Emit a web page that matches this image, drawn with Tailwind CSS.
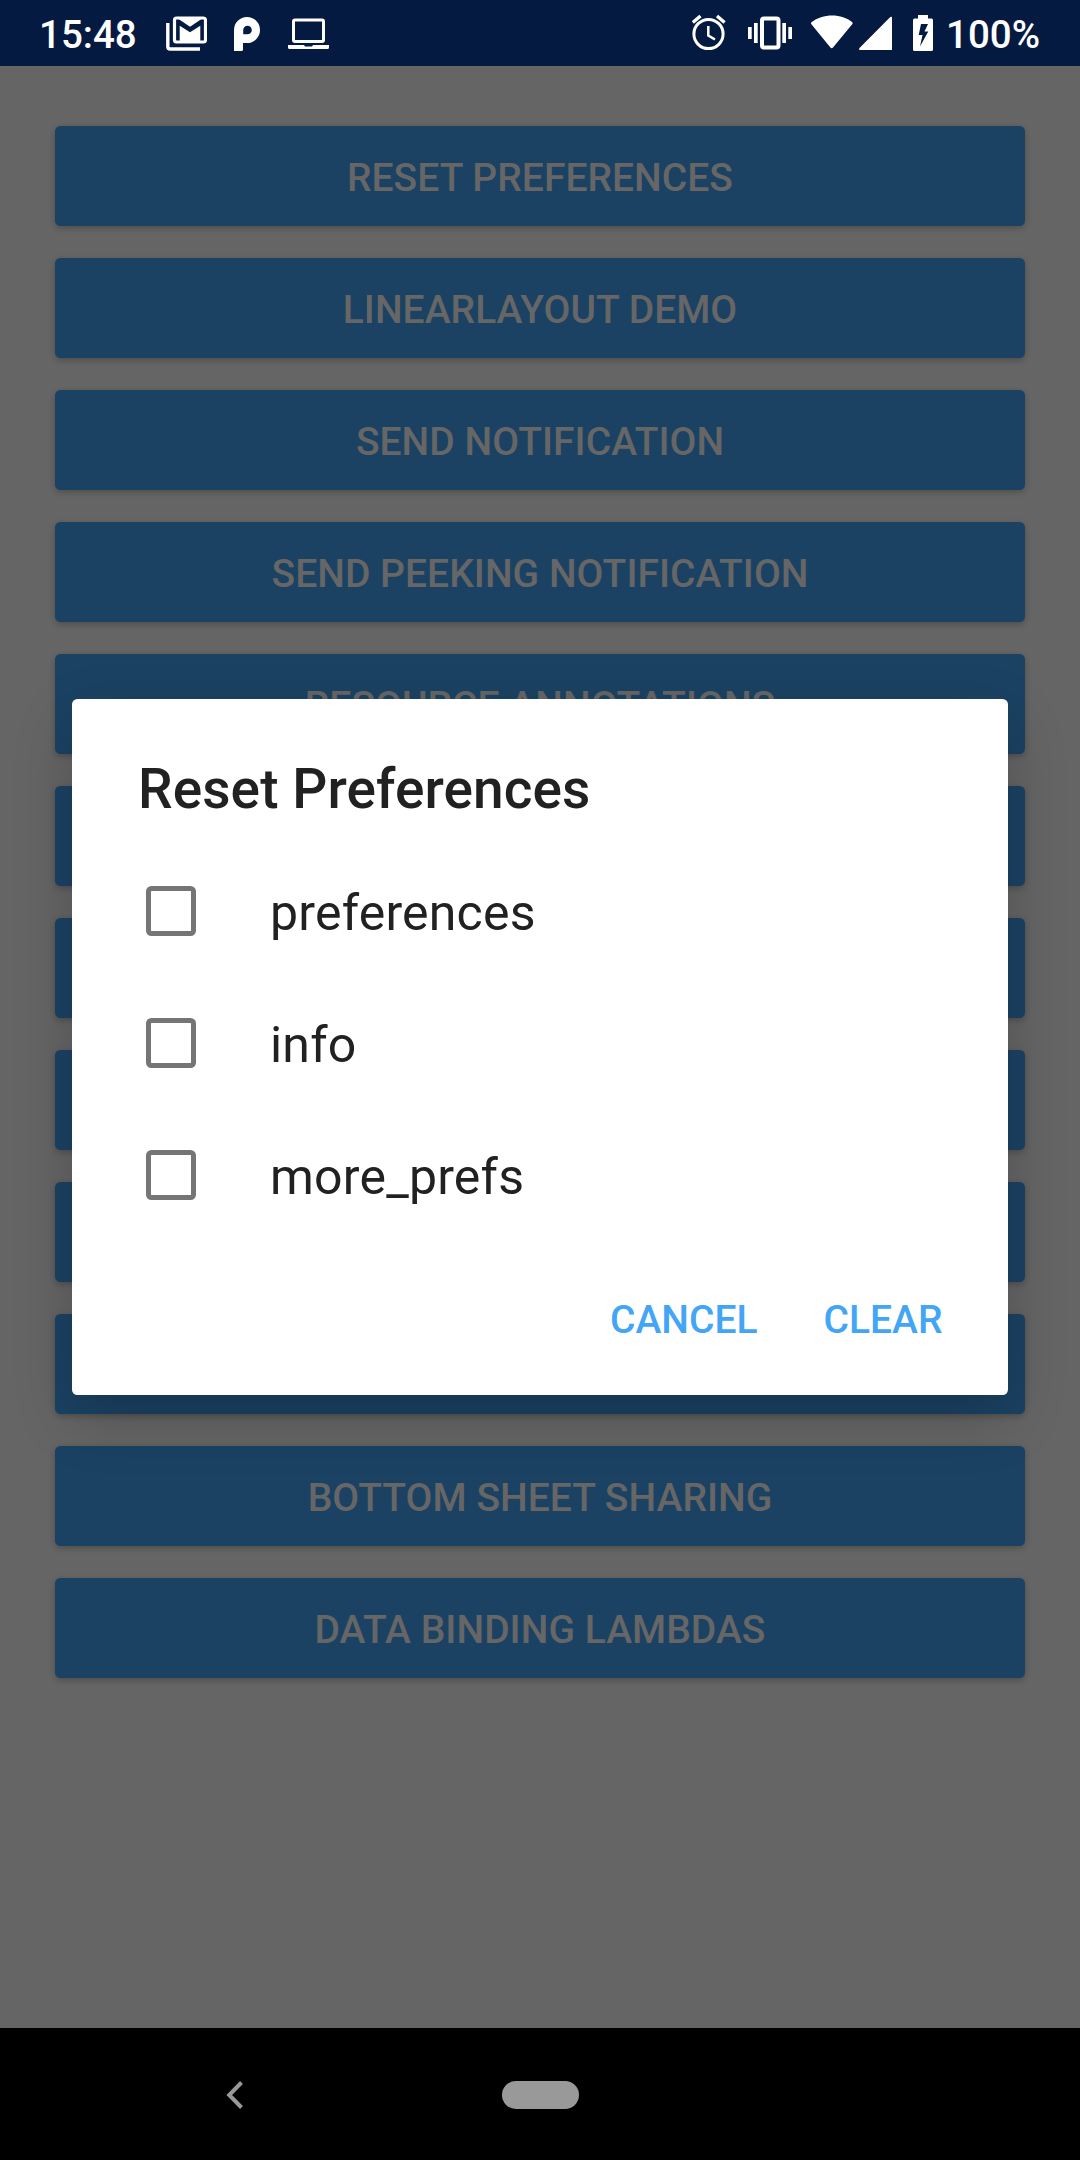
<!DOCTYPE html>
<html lang="en">
<head>
<meta charset="utf-8">
<title>Reset Preferences</title>
<script src="https://cdn.jsdelivr.net/npm/@tailwindcss/browser@4"></script>
</head>
<body class="bg-black">
<div class="relative flex h-[2160px] w-[1080px] flex-col overflow-hidden bg-[#656565] font-['Roboto',sans-serif]">
  <!-- Status bar -->
  <header class="flex h-[66px] shrink-0 items-center justify-between bg-[#051a40] text-[38.5px] font-medium text-white">
    <div class="flex h-full items-center pl-[39px]">
      <span class="w-[127px] pt-[5px] leading-none">15:48</span>
      <svg class="h-[66px] w-[41px]" viewBox="166 0 41 66" fill="none">
        <path d="M167.8 23V46.5Q167.8 49 170.3 49H200" stroke="#fff" stroke-width="3.4"/>
        <rect x="174.500" y="18" width="31" height="24" rx="2" stroke="#fff" stroke-width="3.200"/>
        <path d="M178.500 19H201.500L190 26.800Z" fill="#fff"/>
        <path d="M179.700 25.800L190 32.300L200.300 25.800V43H179.700Z" fill="#fff"/>
      </svg>
      <svg class="ml-[27px] h-[66px] w-[26px]" viewBox="234 0 26 66" fill="#fff">
        <path fill-rule="evenodd" d="M234 51V30A13 13 0 1 1 247 43H243V49.500Q243 51 241.500 51ZM243.200 34.300H247.500A4.300 4.300 0 1 0 243.200 30Z"/>
      </svg>
      <svg class="ml-[28px] h-[66px] w-[41px]" viewBox="288 0 41 66" fill="none">
        <rect x="293.500" y="20" width="30" height="21.500" rx="1.500" stroke="#fff" stroke-width="3"/>
        <path d="M288 45H304L305 46.500H312L313 45H329V47.500Q329 49 327.500 49H289.500Q288 49 288 47.500Z" fill="#fff"/>
      </svg>
    </div>
    <div class="flex h-full items-center pr-[40px]">
      <svg class="h-[66px] w-[34px]" viewBox="692 0 34 66" fill="none" stroke="#fff">
        <circle cx="708.500" cy="34" r="14.600" stroke-width="3"/>
        <path d="M708.300 26V35.500L715 39.500" stroke-width="2.500"/>
        <path d="M692.800 22.500L700.500 16M724.600 22.500L717 16" stroke-width="3.400"/>
      </svg>
      <svg class="ml-[22px] h-[66px] w-[44px]" viewBox="748 0 44 66">
        <rect x="762" y="18.500" width="16.500" height="29" rx="2" fill="none" stroke="#fff" stroke-width="4"/>
        <path fill="#fff" d="M748 27h3.700v12H748zM754 23h3.700v20H754zM782.300 23h3.700v20h-3.700zM788.300 27h3.700v12h-3.700z"/>
      </svg>
      <svg class="ml-[18px] h-[66px] w-[43px]" viewBox="810 0 43 66" fill="#fff">
        <path d="M811.500 22.300C822.500 13.200 842 13.200 852.300 22.300Q853 23 852.400 24L833 47.400Q831.700 49 830.400 47.400L811.200 24Q810.500 23 811.500 22.300Z"/>
      </svg>
      <svg class="ml-[6px] h-[66px] w-[33px]" viewBox="859 0 33 66" fill="#fff">
        <path d="M890.300 17Q892 16.300 892 18V50H860Q858.300 50 859.500 48Z"/>
      </svg>
      <svg class="ml-[21px] h-[66px] w-[20px]" viewBox="913 0 20 66" fill="#fff">
        <path fill-rule="evenodd" d="M918 15H928V18.500H931.500Q933 18.500 933 20V49.500Q933 51 931.500 51H914.500Q913 51 913 49.500V20Q913 18.500 914.500 18.500H918ZM921 24L918.700 35H922.500L920 46.500L928.300 31.500H924.500L928 24Z"/>
      </svg>
      <span class="ml-[13px] pt-[5px] leading-none">100%</span>
    </div>
  </header>

  <!-- Demo buttons, dimmed behind the dialog -->
  <main class="flex flex-1 flex-col gap-[32px] px-[55px] pt-[60px] text-[39px] font-medium tracking-[0.03px] text-[#666666]">
    <div class="flex h-[100px] shrink-0 items-center justify-center rounded-[5.5px] bg-[#1b4263] pt-[5px] shadow-[0_2px_6px_rgba(0,0,0,0.24)]">RESET PREFERENCES</div>
    <div class="flex h-[100px] shrink-0 items-center justify-center rounded-[5.5px] bg-[#1b4263] pt-[5px] shadow-[0_2px_6px_rgba(0,0,0,0.24)]">LINEARLAYOUT DEMO</div>
    <div class="flex h-[100px] shrink-0 items-center justify-center rounded-[5.5px] bg-[#1b4263] pt-[5px] shadow-[0_2px_6px_rgba(0,0,0,0.24)]">SEND NOTIFICATION</div>
    <div class="flex h-[100px] shrink-0 items-center justify-center rounded-[5.5px] bg-[#1b4263] pt-[5px] shadow-[0_2px_6px_rgba(0,0,0,0.24)]">SEND PEEKING NOTIFICATION</div>
    <div class="flex h-[100px] shrink-0 items-center justify-center rounded-[5.5px] bg-[#1b4263] pt-[5px] shadow-[0_2px_6px_rgba(0,0,0,0.24)]">RESOURCE ANNOTATIONS</div>
    <div class="h-[100px] shrink-0 rounded-[5.5px] bg-[#1b4263] shadow-[0_2px_6px_rgba(0,0,0,0.24)]"></div>
    <div class="h-[100px] shrink-0 rounded-[5.5px] bg-[#1b4263] shadow-[0_2px_6px_rgba(0,0,0,0.24)]"></div>
    <div class="h-[100px] shrink-0 rounded-[5.5px] bg-[#1b4263] shadow-[0_2px_6px_rgba(0,0,0,0.24)]"></div>
    <div class="h-[100px] shrink-0 rounded-[5.5px] bg-[#1b4263] shadow-[0_2px_6px_rgba(0,0,0,0.24)]"></div>
    <div class="h-[100px] shrink-0 rounded-[5.5px] bg-[#1b4263] shadow-[0_2px_6px_rgba(0,0,0,0.24)]"></div>
    <div class="flex h-[100px] shrink-0 items-center justify-center rounded-[5.5px] bg-[#1b4263] pt-[5px] shadow-[0_2px_6px_rgba(0,0,0,0.24)]">BOTTOM SHEET SHARING</div>
    <div class="flex h-[100px] shrink-0 items-center justify-center rounded-[5.5px] bg-[#1b4263] pt-[5px] shadow-[0_2px_6px_rgba(0,0,0,0.24)]">DATA BINDING LAMBDAS</div>
  </main>

  <!-- Navigation bar -->
  <nav class="flex h-[132px] shrink-0 items-center bg-black pt-px pl-[226px]">
    <svg class="h-[30px] w-[18px]" viewBox="0 0 18 30" fill="none" stroke="#999" stroke-width="4"><path d="M15.500 2.500L3.200 15L15.500 27.500"/></svg>
    <div class="ml-[258px] h-[28px] w-[77px] rounded-full bg-[#999999]"></div>
  </nav>

  <!-- Dialog -->
  <section class="absolute top-[699px] left-[72px] flex h-[696px] w-[936px] flex-col rounded-[5.5px] bg-white text-[#212121] shadow-[0_22px_60px_rgba(0,0,0,0.2)]">
    <h1 class="mt-[57px] pl-[66px] text-[55px] leading-[66px] font-medium tracking-[0.08px]">Reset Preferences</h1>
    <ul class="mt-[24px] text-[50px] tracking-[0.2px]">
      <li class="flex h-[132px] items-center pl-[74px]"><span class="mb-[2px] size-[50px] rounded-[5.5px] border-[5.5px] border-[#757575]"></span><span class="ml-[74px] pt-[2px]">preferences</span></li>
      <li class="flex h-[132px] items-center pl-[74px]"><span class="mb-[2px] size-[50px] rounded-[5.5px] border-[5.5px] border-[#757575]"></span><span class="ml-[74px] pt-[2px]">info</span></li>
      <li class="flex h-[132px] items-center pl-[74px]"><span class="mb-[2px] size-[50px] rounded-[5.5px] border-[5.5px] border-[#757575]"></span><span class="ml-[74px] pt-[2px]">more_prefs</span></li>
    </ul>
    <div class="mt-[49px] flex justify-end gap-[66px] pr-[65.5px] text-[39px] leading-[58px] font-medium text-[#42a5f5]">
      <span>CANCEL</span><span>CLEAR</span>
    </div>
  </section>
</div>
</body>
</html>
